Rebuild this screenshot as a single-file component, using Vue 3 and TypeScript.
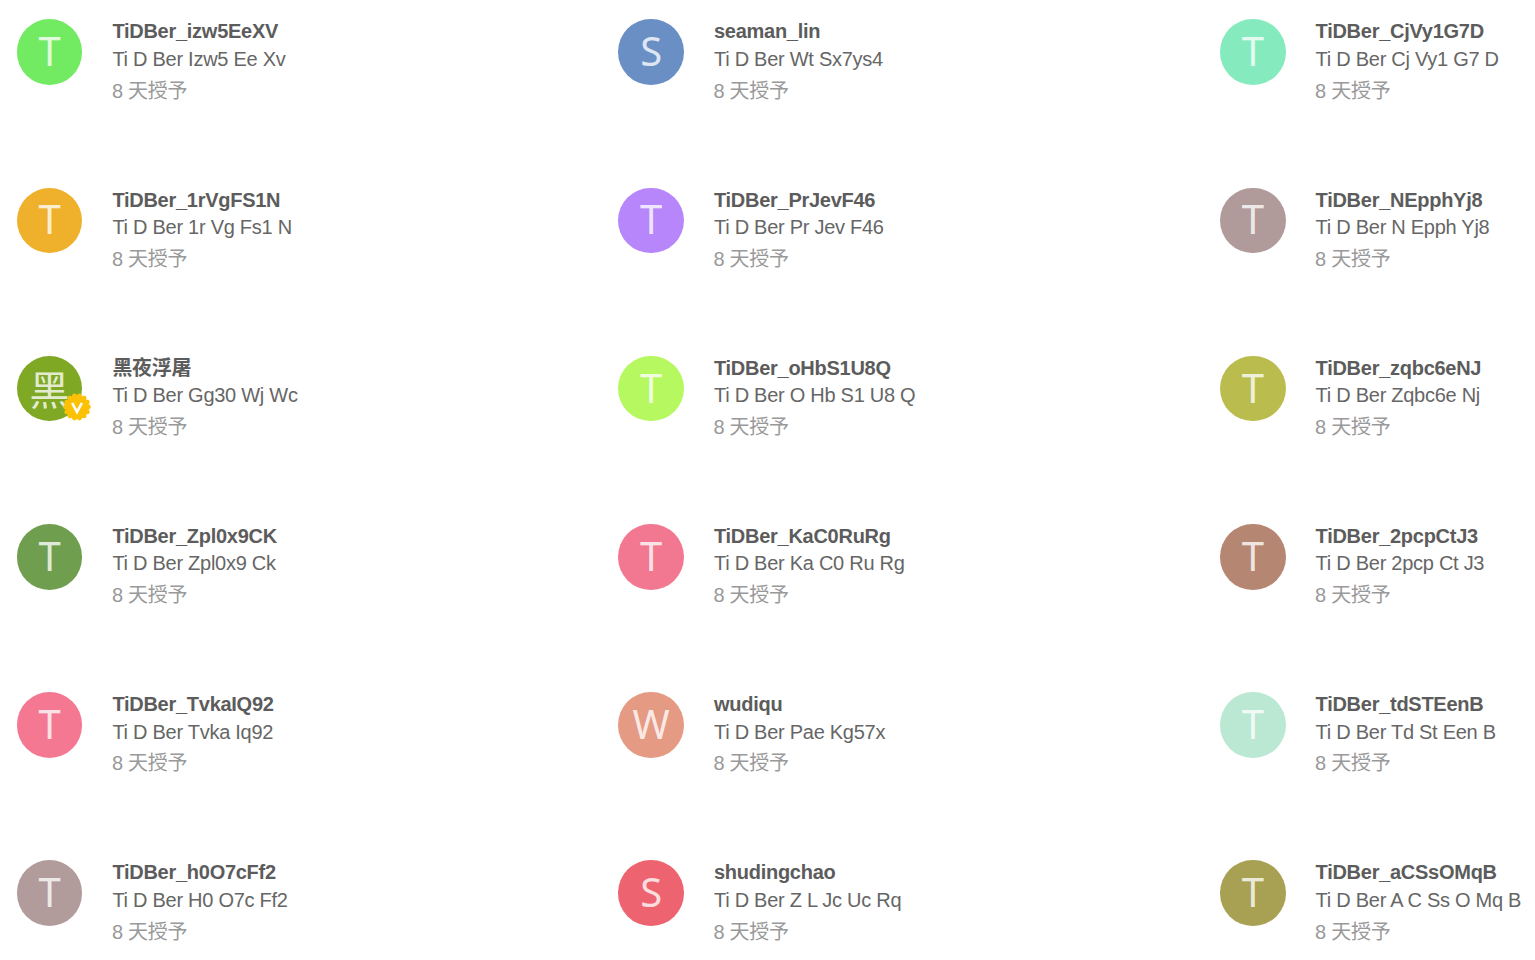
<script setup lang="ts">
interface Member {
  name: string
  title: string
  color: string
  letter: string
  verified?: boolean
}

const members: Member[] = [
  { name: 'TiDBer_izw5EeXV', title: 'Ti D Ber Izw5 Ee Xv', color: '#72eb62', letter: 'T' },
  { name: 'seaman_lin', title: 'Ti D Ber Wt Sx7ys4', color: '#6a8fc4', letter: 'S' },
  { name: 'TiDBer_CjVy1G7D', title: 'Ti D Ber Cj Vy1 G7 D', color: '#85ebbe', letter: 'T' },
  { name: 'TiDBer_1rVgFS1N', title: 'Ti D Ber 1r Vg Fs1 N', color: '#efb02c', letter: 'T' },
  { name: 'TiDBer_PrJevF46', title: 'Ti D Ber Pr Jev F46', color: '#b686fa', letter: 'T' },
  { name: 'TiDBer_NEpphYj8', title: 'Ti D Ber N Epph Yj8', color: '#b19a9a', letter: 'T' },
  { name: '黑夜浮屠', title: 'Ti D Ber Gg30 Wj Wc', color: '#7fa825', letter: '黑', verified: true },
  { name: 'TiDBer_oHbS1U8Q', title: 'Ti D Ber O Hb S1 U8 Q', color: '#b6f860', letter: 'T' },
  { name: 'TiDBer_zqbc6eNJ', title: 'Ti D Ber Zqbc6e Nj', color: '#babd4e', letter: 'T' },
  { name: 'TiDBer_Zpl0x9CK', title: 'Ti D Ber Zpl0x9 Ck', color: '#6f9e4e', letter: 'T' },
  { name: 'TiDBer_KaC0RuRg', title: 'Ti D Ber Ka C0 Ru Rg', color: '#f27892', letter: 'T' },
  { name: 'TiDBer_2pcpCtJ3', title: 'Ti D Ber 2pcp Ct J3', color: '#b58672', letter: 'T' },
  { name: 'TiDBer_TvkaIQ92', title: 'Ti D Ber Tvka Iq92', color: '#f47892', letter: 'T' },
  { name: 'wudiqu', title: 'Ti D Ber Pae Kg57x', color: '#e59a84', letter: 'W' },
  { name: 'TiDBer_tdSTEenB', title: 'Ti D Ber Td St Een B', color: '#bae8d2', letter: 'T' },
  { name: 'TiDBer_h0O7cFf2', title: 'Ti D Ber H0 O7c Ff2', color: '#b29b9b', letter: 'T' },
  { name: 'shudingchao', title: 'Ti D Ber Z L Jc Uc Rq', color: '#ed636f', letter: 'S' },
  { name: 'TiDBer_aCSsOMqB', title: 'Ti D Ber A C Ss O Mq B', color: '#a8a153', letter: 'T' },
]

// зубчики бейджа
const scallops = Array.from({ length: 14 }, (_, i) => {
  const a = (i / 14) * Math.PI * 2
  return { cx: 14 + Math.cos(a) * 11.4, cy: 14 + Math.sin(a) * 11.4 }
})
</script>

<template>
  <div class="grid">
    <div v-for="m in members" :key="m.name" class="member">
      <div class="avatar" :style="{ background: m.color }">
        <span class="letter" :class="{ 'letter--cjk': m.letter === '黑' }">{{ m.letter }}</span>
        <svg v-if="m.verified" class="badge" viewBox="0 0 28 28">
          <circle cx="14" cy="14" r="12" fill="#fcc005" />
          <circle v-for="(s, i) in scallops" :key="i" :cx="s.cx" :cy="s.cy" r="2.4" fill="#fcc005" />
          <path d="M9.2 10 L14 19 L18.8 10" fill="none" stroke="#fff" stroke-width="2.6" />
        </svg>
      </div>
      <div class="info">
        <div class="name">{{ m.name }}</div>
        <div class="title">{{ m.title }}</div>
        <div class="meta">8 天授予</div>
      </div>
    </div>
  </div>
</template>

<style>
html,
body {
  margin: 0;
  background: #fff;
  overflow: hidden;
}
</style>

<style scoped>
.grid {
  display: grid;
  grid-template-columns: 601.6px 601.6px 1fr;
  grid-auto-rows: 168.2px;
  padding: 19.4px 0 0 16.8px;
  height: 940.6px;
  overflow: hidden;
  font-family: "Liberation Sans", "Noto Sans CJK SC", sans-serif;
  letter-spacing: -0.27px;
}

.member {
  display: flex;
  align-items: flex-start;
  gap: 30px;
}

.avatar {
  position: relative;
  flex: 0 0 auto;
  width: 65.6px;
  height: 65.6px;
  border-radius: 50%;
  display: flex;
  align-items: center;
  justify-content: center;
}

.letter {
  padding-bottom: 2px;
  font-family: "Noto Sans", sans-serif;
  font-size: 40px;
  line-height: 1;
  letter-spacing: 0;
  color: rgba(255, 255, 255, 0.8);
}

.letter--cjk {
  font-family: "Noto Sans CJK SC", sans-serif;
}

/* бейдж поверх аватара */
.badge {
  position: absolute;
  left: 46px;
  top: 37px;
  width: 28px;
  height: 28px;
}

.info {
  margin-top: -1px;
}

.name {
  font-size: 20px;
  line-height: 27.4px;
  font-weight: 700;
  color: #5c5c5c;
}

.title {
  font-size: 20px;
  line-height: 27.4px;
  color: #666;
}

.meta {
  margin-top: 4.4px;
  margin-left: -0.5px;
  font-size: 20px;
  line-height: 27.4px;
  color: #999;
}
</style>
